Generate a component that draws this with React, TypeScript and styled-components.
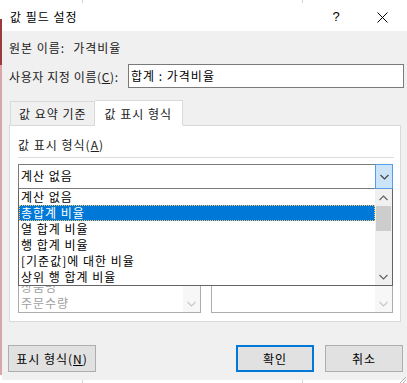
import styled, { createGlobalStyle } from "styled-components";

const GlobalStyle = createGlobalStyle`
  html, body {
    margin: 0;
    padding: 0;
  }
  body {
    width: 407px;
    height: 383px;
    overflow: hidden;
    font-family: "Noto Sans CJK KR", "Noto Sans", sans-serif;
    font-size: 12px;
    letter-spacing: 1px;
    color: #000;
    background:
      linear-gradient(#9c3b3b, #9c3b3b) 0 19px / 2px 46px no-repeat,
      linear-gradient(#d8a7a7, #d8a7a7) 0 65px / 2px 310px no-repeat,
      linear-gradient(90deg, transparent 82px, #d4d4d4 82px, #d4d4d4 83px, transparent 83px) 0 0 / 407px 383px no-repeat,
      linear-gradient(90deg, transparent 302px, #d4d4d4 302px, #d4d4d4 303px, transparent 303px) 0 0 / 407px 383px no-repeat,
      #ffffff;
  }
`;

const summaryItems = ["상품명", "주문수량"];
const showAsItems = [
  "계산 없음",
  "총합계 비율",
  "열 합계 비율",
  "행 합계 비율",
  "[기준값]에 대한 비율",
  "상위 행 합계 비율",
];

function Chevron({ up, color = "#606060" }: { up?: boolean; color?: string }) {
  return (
    <svg width="9" height="6" viewBox="0 0 9 6">
      <polyline
        points={up ? "0.5,5 4.5,1 8.5,5" : "0.5,1 4.5,5 8.5,1"}
        fill="none"
        stroke={color}
        strokeWidth="1.1"
      />
    </svg>
  );
}

export default function App() {
  return (
    <>
      <GlobalStyle />
      <Dialog>
        <TitleBar>
          <Title>값 필드 설정</Title>
          <TitleButtons>
            <HelpButton>?</HelpButton>
            <CloseButton>
              <svg width="11" height="11" viewBox="0 0 11 11">
                <path d="M0.5 0.5 L10.5 10.5 M10.5 0.5 L0.5 10.5" stroke="#000" strokeWidth="1" />
              </svg>
            </CloseButton>
          </TitleButtons>
        </TitleBar>
        <Body>
          <SourceRow>
            <span>원본 이름:</span>
            <span>가격비율</span>
          </SourceRow>
          <NameRow>
            <NameLabel>
              사용자 지정 이름(<u>C</u>):
            </NameLabel>
            <TextField>합계 : 가격비율</TextField>
          </NameRow>
          <Tabs>
            <Tab>값 요약 기준</Tab>
            <Tab $active>값 표시 형식</Tab>
          </Tabs>
          <Panel>
            <GroupLabel>
              값 표시 형식(<u>A</u>)
            </GroupLabel>
            <Separator />
            <ComboWrap>
              <Combo>
                <ComboText>계산 없음</ComboText>
                <ComboButton>
                  <Chevron color="#404040" />
                </ComboButton>
              </Combo>
              <DropList>
                <DropItems>
                  {showAsItems.map((item, i) => (
                    <DropItem key={item} $selected={i === 1}>
                      {item}
                    </DropItem>
                  ))}
                </DropItems>
                <ScrollBar>
                  <ScrollArrow>
                    <Chevron up />
                  </ScrollArrow>
                  <ScrollTrack>
                    <ScrollThumb />
                  </ScrollTrack>
                  <ScrollArrow>
                    <Chevron />
                  </ScrollArrow>
                </ScrollBar>
              </DropList>
            </ComboWrap>
            <ListRow>
              <ListBox>
                <ListItems>
                  {summaryItems.map((item) => (
                    <ListItem key={item}>{item}</ListItem>
                  ))}
                </ListItems>
                <DisabledScroll>
                  <Chevron color="#c8c8c8" />
                </DisabledScroll>
              </ListBox>
              <ListBox>
                <ListItems />
                <DisabledScroll>
                  <Chevron color="#c8c8c8" />
                </DisabledScroll>
              </ListBox>
            </ListRow>
          </Panel>
          <ButtonRow>
            <Button $width={88}>
              표시 형식(<u>N</u>)
            </Button>
            <RightButtons>
              <Button $width={78} $default>
                확인
              </Button>
              <Button $width={78}>취소</Button>
            </RightButtons>
          </ButtonRow>
        </Body>
        <Grip>
          <svg width="10" height="10" viewBox="0 0 10 10">
            <path d="M9 3 L3 9 M9 6 L6 9" stroke="#b0b0b0" strokeWidth="1" />
          </svg>
        </Grip>
      </Dialog>
    </>
  );
}

const Dialog = styled.div`
  position: relative;
  margin: 3px 0 0 2px;
  width: 405px;
  height: 377px;
  background: #f0f0f0;
  display: flex;
  flex-direction: column;
  box-sizing: border-box;
`;

const TitleBar = styled.div`
  height: 28px;
  background: #ffffff;
  display: flex;
  align-items: center;
  justify-content: space-between;
  flex-shrink: 0;
`;

const Title = styled.div`
  padding-left: 8px;
  font-size: 12px;
  line-height: 16px;
`;

const TitleButtons = styled.div`
  display: flex;
  align-items: center;
  height: 100%;
`;

const HelpButton = styled.div`
  width: 46px;
  text-align: center;
  font-family: "Liberation Sans", sans-serif;
  font-size: 13px;
  line-height: 16px;
  letter-spacing: 0;
  padding-left: 4px;
`;

const CloseButton = styled.div`
  width: 46px;
  display: flex;
  justify-content: center;
  align-items: center;
  padding-right: 2px;
`;

const Body = styled.div`
  display: flex;
  flex-direction: column;
  padding: 9px 0 0 7px;
`;

const SourceRow = styled.div`
  display: flex;
  gap: 8px;
  line-height: 16px;
  height: 16px;
  color: #202020;
`;

const NameRow = styled.div`
  display: flex;
  align-items: center;
  justify-content: space-between;
  margin-top: 8px;
  padding-right: 3px;
  color: #202020;
`;

const NameLabel = styled.span`
  letter-spacing: 0.6px;
`;

const TextField = styled.div`
  width: 276px;
  height: 24px;
  box-sizing: border-box;
  border: 1px solid #7a7a7a;
  background: #ffffff;
  padding-left: 2px;
  line-height: 21px;
  color: #000;
`;

const Tabs = styled.div`
  display: flex;
  margin: 11px 0 0 1px;
  height: 26px;
  align-items: flex-end;
`;

const Tab = styled.div<{ $active?: boolean }>`
  height: ${(p) => (p.$active ? 26 : 25)}px;
  box-sizing: border-box;
  padding: 0 ${(p) => (p.$active ? 10 : 7)}px 0 ${(p) => (p.$active ? 10 : 8)}px;
  display: flex;
  align-items: center;
  background: ${(p) => (p.$active ? "#ffffff" : "#f0f0f0")};
  border: 1px solid #d9d9d9;
  border-bottom: ${(p) => (p.$active ? "1px solid #ffffff" : "1px solid #d9d9d9")};
  border-left: ${(p) => (p.$active ? "none" : "1px solid #d9d9d9")};
  margin-bottom: -1px;
  position: relative;
  z-index: ${(p) => (p.$active ? 1 : 0)};
  color: #202020;
`;

const Panel = styled.div`
  width: 392px;
  height: 197px;
  box-sizing: border-box;
  border: 1px solid #d9d9d9;
  background: #ffffff;
  padding: 11px 7px 0 8px;
  display: flex;
  flex-direction: column;
`;

const GroupLabel = styled.div`
  line-height: 16px;
  height: 16px;
  color: #202020;
`;

const Separator = styled.div`
  margin-top: 4px;
  height: 1px;
  background: #dcdcdc;
  margin-right: -1px;
`;

const ComboWrap = styled.div`
  position: relative;
  margin-top: 6px;
`;

const Combo = styled.div`
  height: 25px;
  box-sizing: border-box;
  border: 1px solid #7a7a7a;
  display: flex;
  background: #ffffff;
`;

const ComboText = styled.div`
  flex: 1;
  padding-left: 2px;
  line-height: 22px;
`;

const ComboButton = styled.div`
  width: 16px;
  margin: -1px -1px -1px 0;
  border: 1px solid #569de5;
  background: #cce4f7;
  display: flex;
  align-items: center;
  justify-content: center;
`;

const DropList = styled.div`
  position: absolute;
  top: 100%;
  left: 0;
  right: 0;
  height: 97px;
  box-sizing: border-box;
  border: 1px solid #646464;
  border-top: none;
  background: #ffffff;
  display: flex;
  z-index: 5;
`;

const DropItems = styled.div`
  flex: 1;
  display: flex;
  flex-direction: column;
`;

const DropItem = styled.div<{ $selected?: boolean }>`
  height: 16px;
  line-height: 16px;
  padding-left: 2px;
  box-sizing: border-box;
  background: ${(p) => (p.$selected ? "#0078d7" : "transparent")};
  color: ${(p) => (p.$selected ? "#ffffff" : "#000000")};
  outline: ${(p) => (p.$selected ? "1px dotted #f4c66a" : "none")};
  outline-offset: -1px;
`;

const ScrollBar = styled.div`
  width: 17px;
  background: #f0f0f0;
  display: flex;
  flex-direction: column;
`;

const ScrollArrow = styled.div`
  height: 17px;
  display: flex;
  align-items: center;
  justify-content: center;
`;

const ScrollTrack = styled.div`
  flex: 1;
  padding: 0 1px;
`;

const ScrollThumb = styled.div`
  height: 25px;
  background: #cdcdcd;
`;

const ListRow = styled.div`
  display: grid;
  grid-template-columns: 183px 182px;
  gap: 10px;
  margin-top: 25px;
`;

const ListBox = styled.div`
  height: 99px;
  box-sizing: border-box;
  border: 1px solid #adadad;
  display: flex;
  background: #ffffff;
  overflow: hidden;
`;

const ListItems = styled.div`
  flex: 1;
  display: flex;
  flex-direction: column;
  justify-content: flex-end;
  padding-bottom: 1px;
`;

const ListItem = styled.div`
  height: 16px;
  line-height: 16px;
  padding-left: 2px;
  color: #a0a0a0;
`;

const DisabledScroll = styled.div`
  width: 17px;
  background: #f7f7f7;
  display: flex;
  align-items: flex-end;
  justify-content: center;
  padding-bottom: 5px;
  box-sizing: border-box;
`;

const ButtonRow = styled.div`
  display: flex;
  justify-content: space-between;
  margin-top: 23px;
  padding-right: 4px;
  margin-left: -1px;
`;

const RightButtons = styled.div`
  display: flex;
  gap: 11px;
`;

const Button = styled.div<{ $width: number; $default?: boolean }>`
  width: ${(p) => p.$width}px;
  height: 27px;
  box-sizing: border-box;
  background: #e1e1e1;
  border: ${(p) => (p.$default ? "2px solid #0078d7" : "1px solid #adadad")};
  display: flex;
  align-items: center;
  justify-content: center;
  color: #000;
`;

const Grip = styled.div`
  position: absolute;
  right: 0;
  bottom: 0;
  width: 10px;
  height: 10px;
`;
